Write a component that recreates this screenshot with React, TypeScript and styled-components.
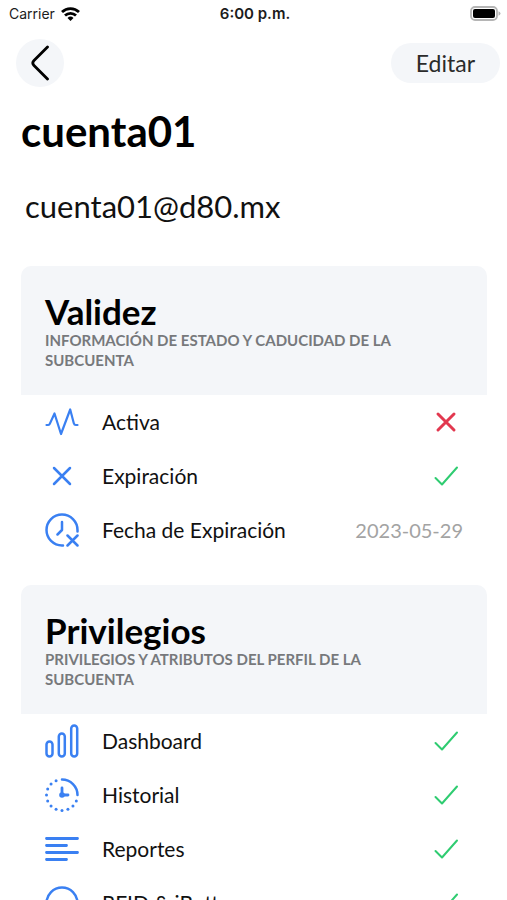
import React from "react";
import styled, { createGlobalStyle } from "styled-components";

const BLUE = "#3a80f2";
const GREEN = "#2fcc71";
const RED = "#e2384f";
const PANEL = "#f4f6f9";

const Global = createGlobalStyle`
  * { box-sizing: border-box; }
  body { margin: 0; background: #fff; color: #000; font-family: Lato, "Liberation Sans", sans-serif; }
`;

const Screen = styled.div`
  height: 100vh;
  overflow: hidden auto;
  scrollbar-width: none;
`;

const StatusBar = styled.div`
  display: grid;
  grid-template-columns: 1fr auto 1fr;
  align-items: center;
  height: 27px;
  padding: 0 6px 0 9px;
  font-family: Inter, "Liberation Sans", sans-serif;
  font-size: 14px;
  color: #1c1c1c;
`;

const Carrier = styled.span`
  display: flex;
  align-items: center;
  gap: 6px;
`;

const Clock = styled.span`
  font-size: 15px;
  font-weight: 600;
`;

const BatteryIcon = styled.svg`
  justify-self: end;
`;

const NavBar = styled.nav`
  display: flex;
  align-items: center;
  justify-content: space-between;
  padding: 12px 7px 0 16px;
`;

const BackButton = styled.button`
  display: grid;
  place-items: center;
  width: 48px;
  height: 48px;
  padding: 0;
  border: 0;
  border-radius: 50%;
  background: ${PANEL};
  color: #000;
`;

const EditButton = styled.button`
  height: 40px;
  padding: 0 25px;
  border: 0;
  border-radius: 20px;
  background: ${PANEL};
  color: #2b2b2b;
  font: 400 23px Lato, "Liberation Sans", sans-serif;
`;

const Main = styled.main`
  padding: 20px 20px 0 21px;
`;

const Account = styled.h1`
  margin: 0;
  font-size: 42px;
  line-height: 48px;
  font-weight: 700;
`;

const Email = styled.p`
  margin: 32px 0 41px 4px;
  font-size: 31px;
  line-height: 38px;
  color: #111;
`;

const Section = styled.section`
  margin-bottom: 28px;
`;

const SectionHeader = styled.header`
  padding: 26px 24px 25px;
  border-radius: 10px 10px 0 0;
  background: ${PANEL};
`;

const SectionTitle = styled.h2`
  margin: 0;
  font-size: 35px;
  line-height: 38px;
  font-weight: 700;
`;

const SectionNote = styled.p`
  max-width: 370px;
  margin: 0;
  font-size: 15px;
  line-height: 20px;
  font-weight: 700;
  text-transform: uppercase;
  color: #77797c;
`;

const List = styled.ul`
  margin: 0;
  padding: 0 24px;
  list-style: none;
`;

const Row = styled.li`
  display: flex;
  align-items: center;
  height: 54px;
`;

const Label = styled.span`
  flex: 1;
  margin-left: 23px;
  font-size: 21px;
  line-height: 26px;
  color: #111;
`;

const DateValue = styled.time`
  font-size: 20px;
  line-height: 26px;
  color: #a3a3a3;
`;

const Icon = styled.svg<{ $color: string }>`
  flex: none;
  width: 34px;
  height: 34px;
  fill: none;
  stroke: ${p => p.$color};
  stroke-width: 2.5;
  stroke-linecap: round;
  stroke-linejoin: round;
`;

const dots = Array.from({ length: 11 }, (_, i) => {
  const a = ((i + 1) * 22.5 * Math.PI) / 180;
  return { x: 17 + 15.5 * Math.cos(a), y: 17 + 15.5 * Math.sin(a) };
});

const icons = {
  activity: <path strokeWidth="2.2" d="M1.500 20h1.700q1.200 0 1.700-1.400L9.500 8.500 16 29 25.200 4.500l3.600 13.700q.5 1.800 2 1.800H32.500" />,
  cross: <path d="M9 9l16 16M25 9L9 25" />,
  clockX: (
    <>
      <path d="M32.500 18.500V17A15.500 15.500 0 1 0 17 32.500h1" />
      <path d="M17 9v8l-4.500 4.500M22.500 22.500l10 10M32.500 22.500l-10 10" />
    </>
  ),
  bars: (
    <>
      <rect x="1.500" y="17.500" width="6" height="15" rx="3" />
      <rect x="13.800" y="9.500" width="6" height="23" rx="3" />
      <rect x="26.200" y="1.500" width="6" height="31" rx="3" />
    </>
  ),
  history: (
    <>
      <path d="M17 1.500A15.500 15.500 0 0 1 32.500 17" />
      {dots.map((d, i) => <circle key={i} cx={d.x} cy={d.y} r="1.5" fill={BLUE} stroke="none" />)}
      <path strokeWidth="2.800" d="M17 10V17h6" />
      <circle cx="17" cy="17" r="2.800" fill={BLUE} stroke="none" />
    </>
  ),
  lines: <path strokeWidth="2.800" d="M1.500 6.500h31M1.500 13.500h20M1.500 20.500h31M1.500 27.500h20" />,
  ring: <circle cx="17" cy="17" r="15.5" />,
};

type Entry = { icon: keyof typeof icons; label: string; value: boolean | string };

const validity: Entry[] = [
  { icon: "activity", label: "Activa", value: false },
  { icon: "cross", label: "Expiración", value: true },
  { icon: "clockX", label: "Fecha de Expiración", value: "2023-05-29" },
];

const privileges: Entry[] = [
  { icon: "bars", label: "Dashboard", value: true },
  { icon: "history", label: "Historial", value: true },
  { icon: "lines", label: "Reportes", value: true },
  { icon: "ring", label: "RFID & iButton", value: true },
];

function Value({ value }: { value: boolean | string }) {
  if (typeof value === "string") return <DateValue dateTime={value}>{value}</DateValue>;
  return value ? (
    <Icon $color={GREEN} viewBox="0 0 34 34" role="img" aria-label="Sí">
      <path strokeWidth="2" d="M6.500 19l6.500 6.500L28 8.500" />
    </Icon>
  ) : (
    <Icon $color={RED} viewBox="0 0 34 34" role="img" aria-label="No">
      <path strokeWidth="3" d="M9 9l16 16M25 9L9 25" />
    </Icon>
  );
}

function Group({ title, note, entries }: { title: string; note: string; entries: Entry[] }) {
  return (
    <Section>
      <SectionHeader>
        <SectionTitle>{title}</SectionTitle>
        <SectionNote>{note}</SectionNote>
      </SectionHeader>
      <List>
        {entries.map(e => (
          <Row key={e.label}>
            <Icon $color={BLUE} viewBox="0 0 34 34" aria-hidden="true">{icons[e.icon]}</Icon>
            <Label>{e.label}</Label>
            <Value value={e.value} />
          </Row>
        ))}
      </List>
    </Section>
  );
}

export default function App() {
  return (
    <Screen>
      <Global />
      <StatusBar>
        <Carrier>
          Carrier
          <svg width="19" height="14" viewBox="0 0 19 14" fill="none" stroke="#000" strokeWidth="2.800" aria-hidden="true">
            <path d="M1 5a12.200 12.200 0 0 1 17 0M4 8.500a8 8 0 0 1 11 0" />
            <path d="M9.500 14L6.500 11a4.400 4.400 0 0 1 6 0z" fill="#000" stroke="none" />
          </svg>
        </Carrier>
        <Clock>6:00 p.m.</Clock>
        <BatteryIcon width="31" height="15" viewBox="0 0 31 15" aria-hidden="true">
          <rect x="1" y="1" width="26" height="13" rx="4" fill="#fff" stroke="#b5b5b5" strokeWidth="1.800" />
          <rect x="3" y="3" width="22" height="9" rx="2" fill="#000" />
          <path d="M28.500 5.300q2 .7 2 2.200t-2 2.200z" fill="#b5b5b5" />
        </BatteryIcon>
      </StatusBar>
      <NavBar>
        <BackButton aria-label="Atrás">
          <svg width="20" height="36" viewBox="0 0 20 36" fill="none" stroke="currentColor" strokeWidth="2.800" strokeLinecap="round" aria-hidden="true">
            <path d="M17.500 2L4 15.600q-2.400 2.400 0 4.800L17.500 34" />
          </svg>
        </BackButton>
        <EditButton>Editar</EditButton>
      </NavBar>
      <Main>
        <Account>cuenta01</Account>
        <Email>cuenta01@d80.mx</Email>
        <Group title="Validez" note="Información de estado y caducidad de la subcuenta" entries={validity} />
        <Group title="Privilegios" note="Privilegios y atributos del perfil de la subcuenta" entries={privileges} />
      </Main>
    </Screen>
  );
}
